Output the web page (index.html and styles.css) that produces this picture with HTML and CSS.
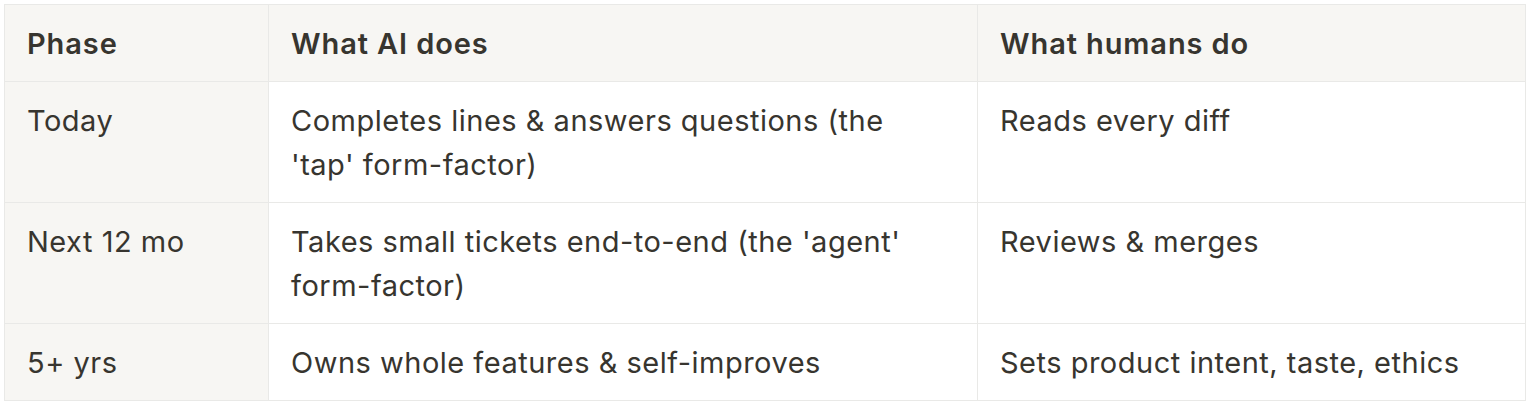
FILE: index.html
```html
<!DOCTYPE html>
<html>
<head>
<meta charset="utf-8">
<link rel="stylesheet" href="styles.css">
</head>
<body>
<div class="wrap">
<table class="grid">
  <colgroup>
    <col class="c1">
    <col class="c2">
    <col class="c3">
  </colgroup>
  <thead>
    <tr>
      <th>Phase</th>
      <th>What AI does</th>
      <th>What humans do</th>
    </tr>
  </thead>
  <tbody>
    <tr>
      <td class="rowhead">Today</td>
      <td>Completes lines &amp; answers questions (the 'tap' form-factor)</td>
      <td>Reads every diff</td>
    </tr>
    <tr>
      <td class="rowhead">Next 12 mo</td>
      <td>Takes small tickets end-to-end (the 'agent' form-factor)</td>
      <td>Reviews &amp; merges</td>
    </tr>
    <tr>
      <td class="rowhead">5+ yrs</td>
      <td>Owns whole features &amp; self-improves</td>
      <td>Sets product intent, taste, ethics</td>
    </tr>
  </tbody>
</table>
</div>
</body>
</html>
```

FILE: styles.css
```css
html, body {
  margin: 0;
  padding: 0;
  background: #ffffff;
}
.wrap {
  padding: 4px 5px 0 4px;
}
.grid {
  border-collapse: collapse;
  table-layout: fixed;
  width: 1521px;
  font-family: Inter, "Noto Sans", sans-serif;
  font-size: 29px;
  line-height: 44px;
  letter-spacing: 0.5px;
  color: #37352f;
}
.c1 { width: 264px; }
.c2 { width: 709px; }
.c3 { width: 548px; }
.grid th, .grid td {
  border: 1px solid #e9e9e7;
  padding: 17px 22px 15px 22px;
  text-align: left;
  vertical-align: top;
  font-weight: 400;
}
.grid th {
  background: #f7f6f3;
  font-weight: 600;
  letter-spacing: 0.9px;
}
.grid td.rowhead {
  background: #f7f6f3;
}
```
